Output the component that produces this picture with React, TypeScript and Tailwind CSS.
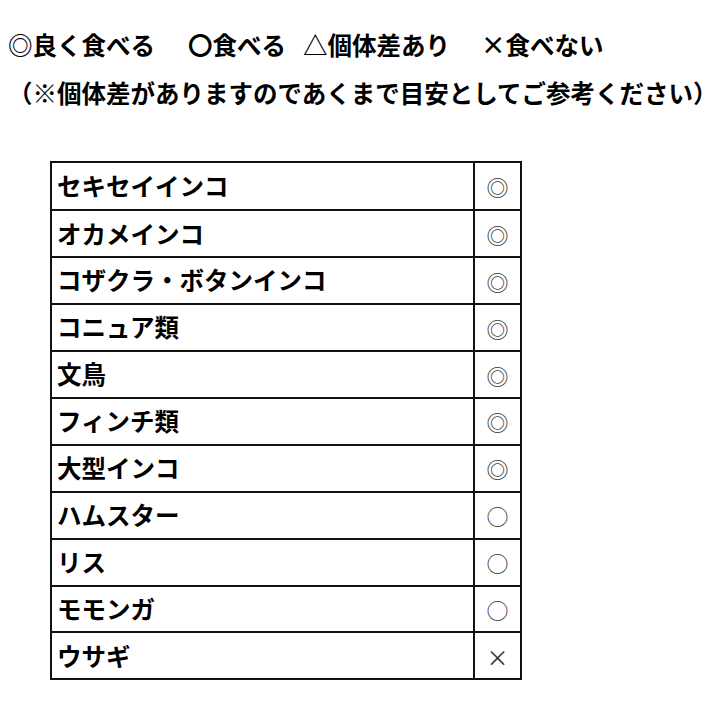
const rows: { name: string; mark: string }[] = [
  { name: "セキセイインコ", mark: "◎" },
  { name: "オカメインコ", mark: "◎" },
  { name: "コザクラ・ボタンインコ", mark: "◎" },
  { name: "コニュア類", mark: "◎" },
  { name: "文鳥", mark: "◎" },
  { name: "フィンチ類", mark: "◎" },
  { name: "大型インコ", mark: "◎" },
  { name: "ハムスター", mark: "○" },
  { name: "リス", mark: "○" },
  { name: "モモンガ", mark: "○" },
  { name: "ウサギ", mark: "×" },
];

export default function App() {
  return (
    <div
      className="w-[720px] h-[720px] bg-white text-black overflow-hidden"
      style={{ fontFamily: '"Noto Sans CJK JP", "Noto Sans", sans-serif' }}
    >
      {/* Legend */}
      <div className="flex items-center pt-[30px] pl-[8px] h-[60px] text-[24.5px] font-bold leading-none">
        <span className="w-[180px]">◎良く食べる</span>
        <span className="w-[115px]">〇食べる</span>
        <span className="w-[178px]">△個体差あり</span>
        <span>×食べない</span>
      </div>
      <div className="pl-[8px] pt-[21px] text-[24.5px] font-bold leading-none whitespace-nowrap">
        （※個体差がありますのであくまで目安としてご参考ください）
      </div>

      {/* Table */}
      <div className="ml-[50px] mt-[55px] w-[472px] border-2 border-[#111]">
        {rows.map((row, i) => (
          <div
            key={row.name}
            className={
              "flex h-[46.9px]" + (i > 0 ? " border-t-2 border-[#111]" : "")
            }
          >
            <div className="flex-1 flex items-center pl-[5px] text-[24.5px] font-bold leading-none">
              {row.name}
            </div>
            <div className="w-[47px] border-l-2 border-[#111] flex items-center justify-center text-[22px] font-normal text-[#333] leading-none">
              {row.mark}
            </div>
          </div>
        ))}
      </div>
    </div>
  );
}
